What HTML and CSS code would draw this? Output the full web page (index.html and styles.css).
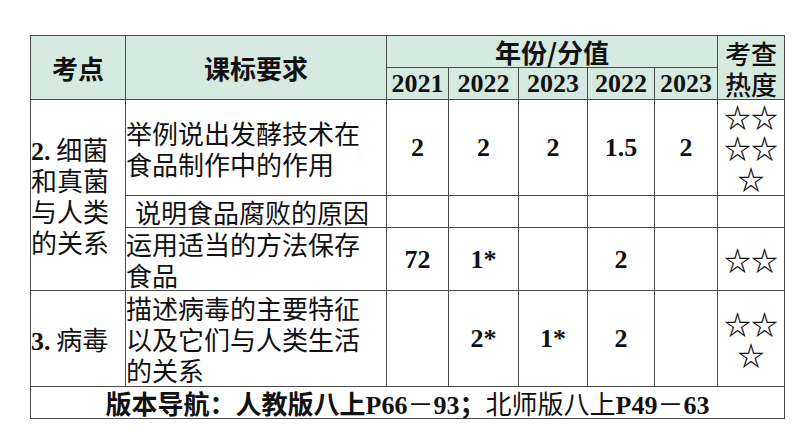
FILE: index.html
```html
<!DOCTYPE html>
<html lang="zh">
<head>
<meta charset="utf-8">
<link rel="stylesheet" href="styles.css">
</head>
<body>
<table class="grid">
  <colgroup>
    <col class="c-topic"><col class="c-req"><col class="c-y1"><col class="c-y2"><col class="c-y3"><col class="c-y4"><col class="c-y5"><col class="c-heat">
  </colgroup>
  <thead>
    <tr class="h1">
      <th rowspan="2" class="hd">考点</th>
      <th rowspan="2" class="hd">课标要求</th>
      <th colspan="5" class="hd">年份/分值</th>
      <th rowspan="2" class="hd heat-h">考查<br>热度</th>
    </tr>
    <tr class="h2">
      <th class="yr">2021</th>
      <th class="yr">2022</th>
      <th class="yr">2023</th>
      <th class="yr">2022</th>
      <th class="yr">2023</th>
    </tr>
  </thead>
  <tbody>
    <tr class="r1">
      <td rowspan="3" class="topic"><b class="num">2.</b> 细菌<br>和真菌<br>与人类<br>的关系</td>
      <td class="req">举例说出发酵技术在<br>食品制作中的作用</td>
      <td class="val">2</td>
      <td class="val">2</td>
      <td class="val">2</td>
      <td class="val">1.5</td>
      <td class="val">2</td>
      <td class="stars">☆☆<br>☆☆<br>☆</td>
    </tr>
    <tr class="r2">
      <td class="req"><span class="indent">说明食品腐败的原因</span></td>
      <td class="val"></td>
      <td class="val"></td>
      <td class="val"></td>
      <td class="val"></td>
      <td class="val"></td>
      <td class="stars"></td>
    </tr>
    <tr class="r3">
      <td class="req">运用适当的方法保存<br>食品</td>
      <td class="val">72</td>
      <td class="val">1*</td>
      <td class="val"></td>
      <td class="val">2</td>
      <td class="val"></td>
      <td class="stars">☆☆</td>
    </tr>
    <tr class="r4">
      <td class="topic"><b class="num">3.</b> 病毒</td>
      <td class="req">描述病毒的主要特征<br>以及它们与人类生活<br>的关系</td>
      <td class="val"></td>
      <td class="val">2*</td>
      <td class="val">1*</td>
      <td class="val">2</td>
      <td class="val"></td>
      <td class="stars">☆☆<br>☆</td>
    </tr>
    <tr class="r5">
      <td colspan="8" class="foot"><span class="fb">版本导航：人教版八上</span><b class="num">P66</b><span class="dash">－</span><b class="num">93</b><span class="fb">；</span>北师版八上<b class="num">P49</b><span class="dash">－</span><b class="num">63</b></td>
    </tr>
  </tbody>
</table>
</body>
</html>
```

FILE: styles.css
```css
html, body {
  margin: 0;
  padding: 0;
  background: #ffffff;
}
body {
  font-family: "Noto Sans CJK SC", "Noto Sans", sans-serif;
  color: #111;
}
.grid {
  margin: 35px 0 0 30px;
  border-collapse: collapse;
  table-layout: fixed;
  width: 754px;
  font-size: 26px;
  line-height: 31px;
}
.c-topic { width: 95px; }
.c-req { width: 261px; }
.c-y1 { width: 62px; }
.c-y2 { width: 70px; }
.c-y3 { width: 69px; }
.c-y4 { width: 67px; }
.c-y5 { width: 63px; }
.c-heat { width: 67px; }
.grid th, .grid td {
  border: 1px solid #4a4a4a;
  padding: 0;
  vertical-align: middle;
}
.grid thead th {
  background: #d6e9e1;
  font-weight: 700;
  text-align: center;
}
.h1 { height: 32px; }
.h2 { height: 30px; }
.r1 { height: 96px; }
.r2 { height: 32px; }
.r3 { height: 62px; }
.r4 { height: 96px; }
.r5 { height: 31px; }
.grid thead th.heat-h {
  font-weight: 500;
  line-height: 31px;
}
.yr {
  font-family: "Liberation Serif", serif;
  font-weight: 700;
}
.topic {
  padding: 0 0 0 9px;
  white-space: nowrap;
}
.num {
  font-family: "Liberation Serif", serif;
  font-weight: 700;
  line-height: 20px;
}
.req {
  padding: 0 2px 0 5px;
  white-space: nowrap;
}
.indent {
  padding-left: 9px;
}
.val {
  text-align: center;
  font-family: "Liberation Serif", serif;
  font-weight: 700;
}
.stars {
  text-align: center;
  white-space: nowrap;
  font-size: 27px;
  font-weight: 700;
  line-height: 31px;
}
.foot {
  text-align: center;
}
.fb {
  font-weight: 700;
}
.dash {
  font-weight: 400;
  line-height: 20px;
}
```
